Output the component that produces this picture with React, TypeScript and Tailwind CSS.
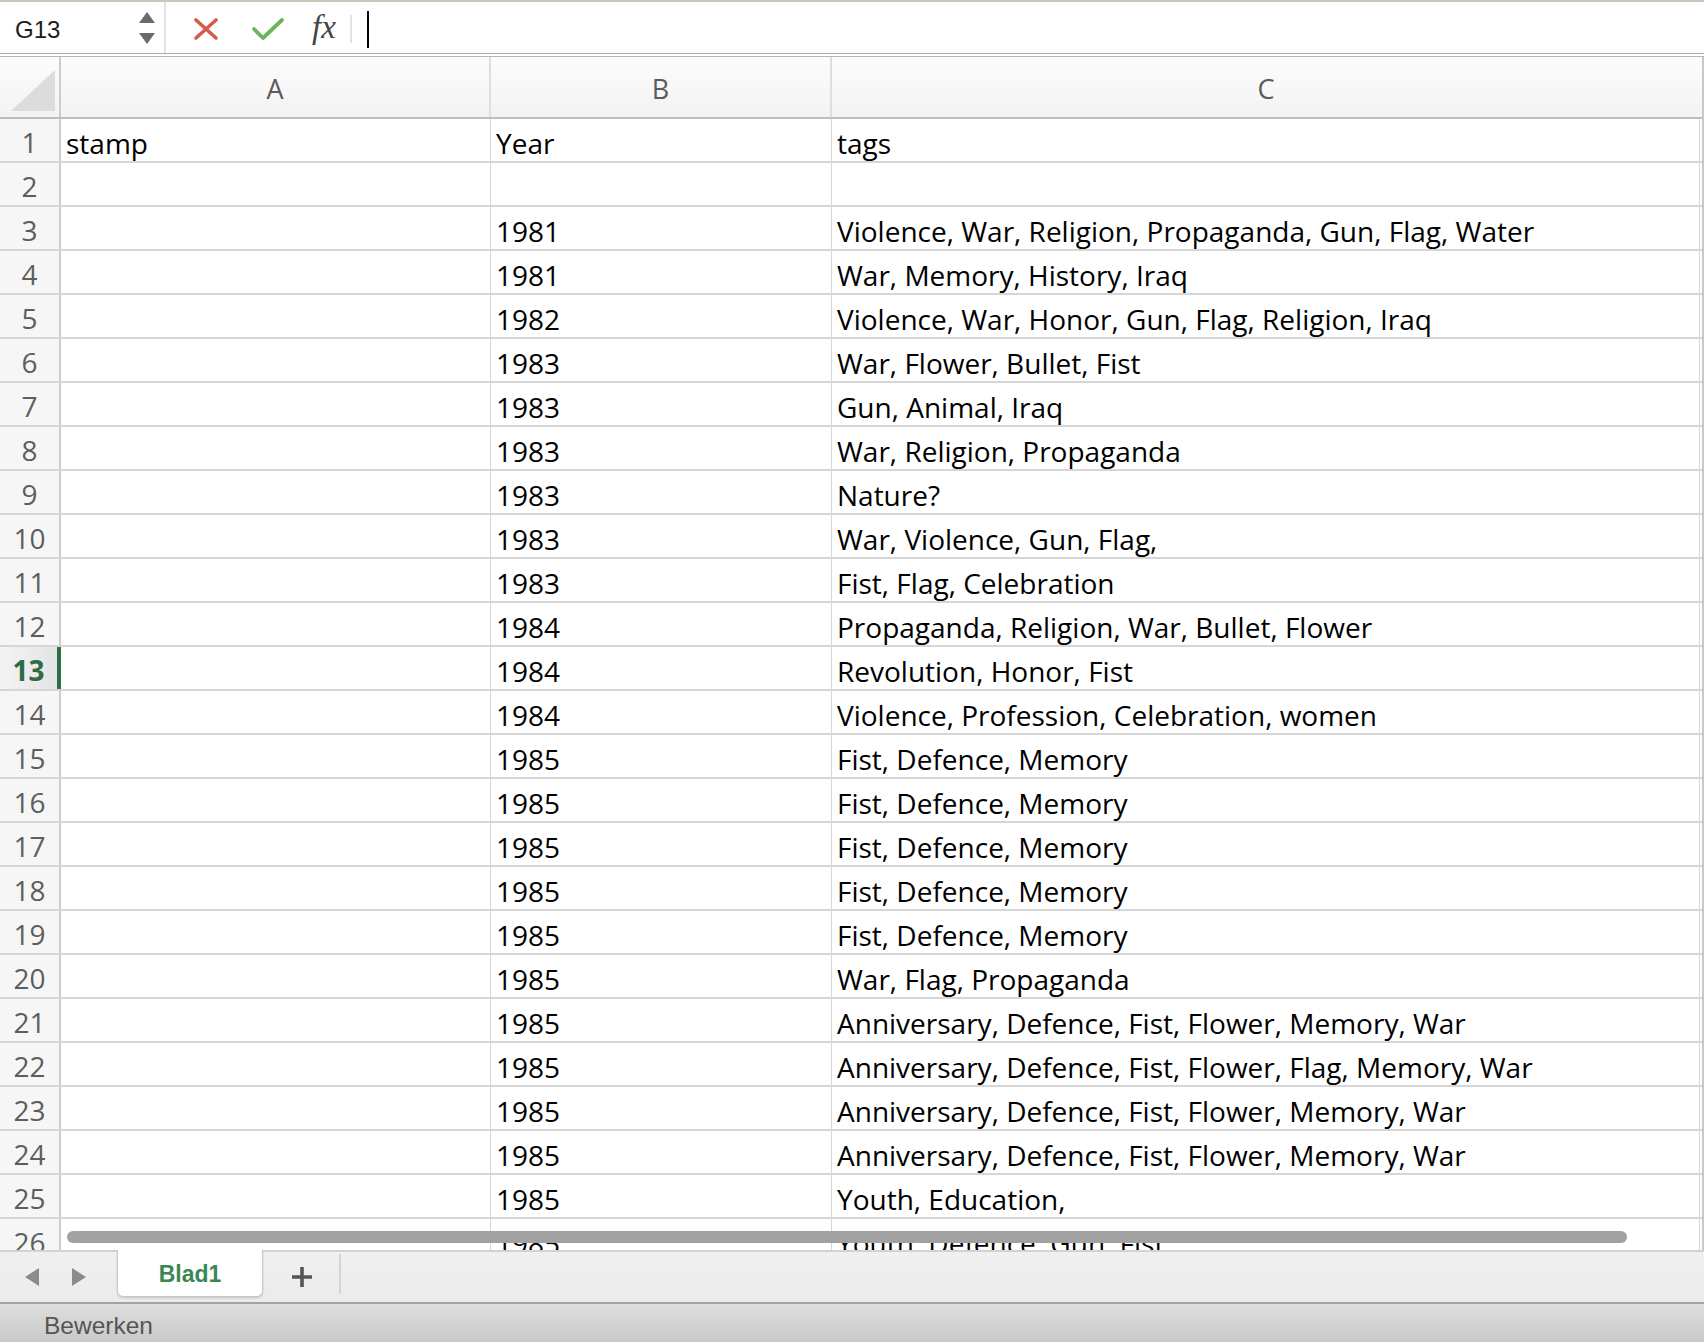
import React from 'react';

const rows: [string, string, string][] = [
  ['stamp', 'Year', 'tags'],
  ['', '', ''],
  ['', '1981', 'Violence, War, Religion, Propaganda, Gun, Flag, Water'],
  ['', '1981', 'War, Memory, History, Iraq'],
  ['', '1982', 'Violence, War, Honor, Gun, Flag, Religion, Iraq'],
  ['', '1983', 'War, Flower, Bullet, Fist'],
  ['', '1983', 'Gun, Animal, Iraq'],
  ['', '1983', 'War, Religion, Propaganda'],
  ['', '1983', 'Nature?'],
  ['', '1983', 'War, Violence, Gun, Flag,'],
  ['', '1983', 'Fist, Flag, Celebration'],
  ['', '1984', 'Propaganda, Religion, War, Bullet, Flower'],
  ['', '1984', 'Revolution, Honor, Fist'],
  ['', '1984', 'Violence, Profession, Celebration, women'],
  ['', '1985', 'Fist, Defence, Memory'],
  ['', '1985', 'Fist, Defence, Memory'],
  ['', '1985', 'Fist, Defence, Memory'],
  ['', '1985', 'Fist, Defence, Memory'],
  ['', '1985', 'Fist, Defence, Memory'],
  ['', '1985', 'War, Flag, Propaganda'],
  ['', '1985', 'Anniversary, Defence, Fist, Flower, Memory, War'],
  ['', '1985', 'Anniversary, Defence, Fist, Flower, Flag, Memory, War'],
  ['', '1985', 'Anniversary, Defence, Fist, Flower, Memory, War'],
  ['', '1985', 'Anniversary, Defence, Fist, Flower, Memory, War'],
  ['', '1985', 'Youth, Education,'],
  ['', '1985', 'Youth, Defence, Gun, Fist'],
];

const SELECTED_ROW = 13;

const Cell: React.FC<{ w: string; children?: React.ReactNode }> = ({ w, children }) => (
  <div className={`${w} shrink-0 h-full border-r border-[#d6d6d6] flex items-center pl-[5px] pt-[5px] whitespace-nowrap overflow-hidden`}>
    {children}
  </div>
);

const FormulaBar: React.FC = () => (
  <div className="h-[52px] shrink-0 flex items-stretch bg-white border-b border-[#a9a9a9]">
    <div className="w-[166px] shrink-0 flex items-center justify-between pl-[15px] pr-[8px] pt-[5px] border-r-2 border-[#e3e3e3]">
      <span className="font-['Liberation_Sans',sans-serif] text-[24px] text-[#1c1c1c]">G13</span>
      <svg width="18" height="36" viewBox="0 0 18 36" className="-mt-[4px]">
        <polygon points="9,2 17,13 1,13" fill="#6b6b6b" />
        <polygon points="1,23 17,23 9,34" fill="#6b6b6b" />
      </svg>
    </div>
    <div className="flex items-center pl-[27px] pt-[3px]">
      <svg width="26" height="22" viewBox="0 0 26 22">
        <path d="M3 2 L23 20 M23 2 L3 20" stroke="#d65b4f" strokeWidth="3.6" strokeLinecap="round" />
      </svg>
      <svg width="32" height="24" viewBox="0 0 32 24" className="ml-[33px]">
        <path d="M2 12 L11 21 L30 3" stroke="#6cb45b" strokeWidth="3.8" fill="none" strokeLinecap="round" strokeLinejoin="round" />
      </svg>
      <span className="ml-[28px] font-['Liberation_Serif',serif] italic text-[33px] text-[#444] leading-none -mt-[4px]">fx</span>
      <div className="ml-[14px] w-[2px] h-[28px] bg-[#e2e2e2]" />
      <div className="ml-[15px] w-[2px] h-[37px] bg-black" />
    </div>
  </div>
);

const HeaderRow: React.FC = () => (
  <div className="h-[62px] shrink-0 flex border-b-2 border-[#bdbdbd] bg-gradient-to-b from-[#fcfcfc] to-[#f3f3f3] text-[#5b5b5b] text-[27px]">
    <div className="w-[61px] shrink-0 border-r-2 border-[#cdcdcd] relative">
      <svg width="61" height="60" viewBox="0 0 61 60" className="absolute left-0 top-0">
        <polygon points="55,13 55,54 11,54" fill="#dcdcdc" />
      </svg>
    </div>
    <div className="w-[430px] shrink-0 border-r-2 border-[#dedede] flex items-center justify-center pt-[5px]">A</div>
    <div className="w-[341px] shrink-0 border-r-2 border-[#dedede] flex items-center justify-center pt-[5px]">B</div>
    <div className="w-[868px] shrink-0 flex items-center justify-center pt-[5px]">C</div>
  </div>
);

const DataRow: React.FC<{ n: number; cells: [string, string, string] }> = ({ n, cells }) => {
  const selected = n === SELECTED_ROW;
  return (
    <div className="h-[44px] flex border-b-2 border-[#d6d6d6] shrink-0">
      <div
        className={
          selected
            ? 'w-[61px] shrink-0 h-full flex items-center justify-center pt-[4px] bg-gradient-to-r from-[#f4f4f4] to-[#e4e4e4] border-r-4 border-[#2f6f46] text-[#2c6b43] font-bold'
            : 'w-[61px] shrink-0 h-full flex items-center justify-center pt-[4px] bg-[#f6f6f6] border-r-2 border-[#cdcdcd] text-[#5e5e5e]'
        }
      >
        {n}
      </div>
      <Cell w="w-[430px]">{cells[0]}</Cell>
      <Cell w="w-[341px]">{cells[1]}</Cell>
      <Cell w="w-[868px]">{cells[2]}</Cell>
    </div>
  );
};

const TabBar: React.FC = () => (
  <div className="h-[52px] shrink-0 flex items-start border-t-2 border-[#d2d2d2] bg-gradient-to-b from-[#f0f0f0] to-[#ebebeb]">
    <div className="h-full flex items-center pl-[24px] gap-[31px]">
      <svg width="16" height="20" viewBox="0 0 16 20">
        <polygon points="15,1 15,19 1,10" fill="#8b8b8b" />
      </svg>
      <svg width="16" height="20" viewBox="0 0 16 20">
        <polygon points="1,1 1,19 15,10" fill="#8b8b8b" />
      </svg>
    </div>
    <div className="ml-[30px] -mt-[2px] w-[146px] h-[47px] bg-white border border-t-0 border-[#c9c9c9] rounded-b-[6px] shadow-[0_1px_2px_rgba(0,0,0,0.18)] flex items-center justify-center pt-[3px] font-['Liberation_Sans',sans-serif] font-bold text-[23px] text-[#3b8754]">
      Blad1
    </div>
    <div className="h-full flex items-center ml-[28px]">
      <svg width="22" height="22" viewBox="0 0 22 22">
        <path d="M11 1 V21 M1 11 H21" stroke="#555" strokeWidth="3.6" />
      </svg>
    </div>
    <div className="ml-[26px] mt-[2px] w-[2px] h-[40px] bg-[#d4d4d4]" />
  </div>
);

const StatusBar: React.FC = () => (
  <div className="h-[40px] shrink-0 border-t-2 border-[#a3a3a3] bg-gradient-to-b from-[#dedede] to-[#c9c9c9] flex items-center pl-[44px] pt-[6px]">
    <span className="font-['Liberation_Sans',sans-serif] text-[24.5px] text-[#555]">Bewerken</span>
  </div>
);

export default function App() {
  return (
    <div className="w-[1704px] h-[1342px] flex flex-col overflow-hidden bg-white font-['Open_Sans',sans-serif]">
      <div className="h-[2px] shrink-0 bg-[#cbc7bb]" />
      <FormulaBar />
      <div className="h-[3px] shrink-0 border-b border-[#b4b4b4] bg-white" />
      <div className="flex-1 min-h-0 relative overflow-hidden">
        <div className="w-[1704px] border-r-2 border-[#c8c8c8] h-full flex flex-col overflow-hidden text-[28px] text-black">
          <HeaderRow />
          {rows.map((r, i) => (
            <DataRow key={i} n={i + 1} cells={r} />
          ))}
        </div>
        <div className="absolute left-[67px] top-[1174px] w-[1560px] h-[12px] rounded-full bg-[#a1a1a1]" />
      </div>
      <TabBar />
      <StatusBar />
    </div>
  );
}
